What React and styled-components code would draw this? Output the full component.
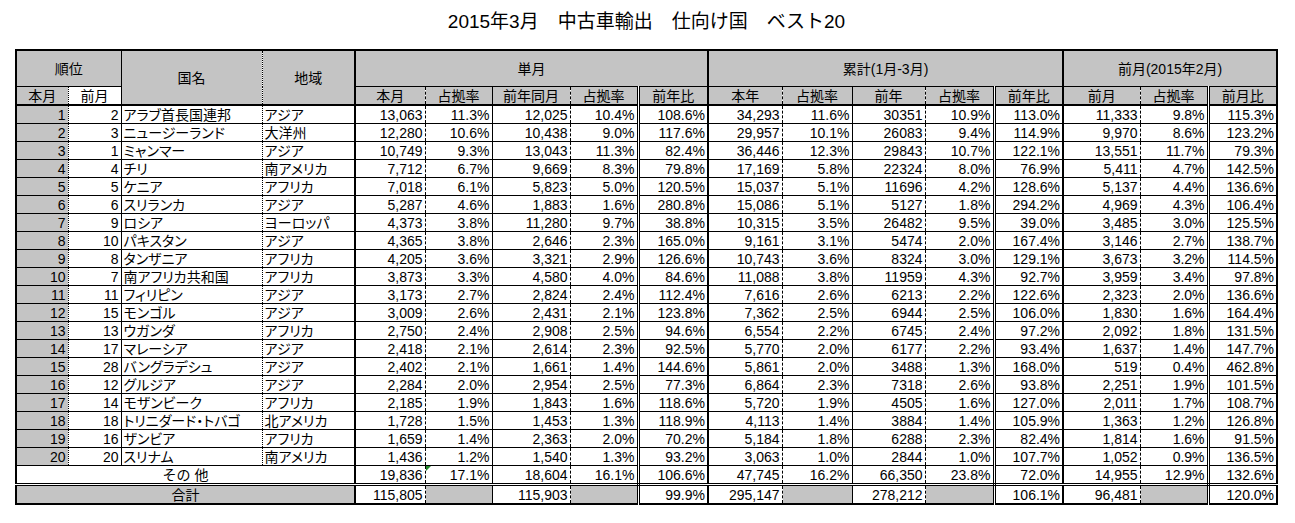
import React from "react";
import styled, { createGlobalStyle, css } from "styled-components";

const GlobalStyle = createGlobalStyle`
  html, body {
    margin: 0;
    padding: 0;
    background: #ffffff;
  }
  body {
    font-family: "Liberation Sans", "Noto Sans CJK JP", sans-serif;
    color: #000;
  }
`;

const GRAY = "#c4c4c4";

const LINES = {
  dotted: "1px dotted #000",
  solid: "1px solid #000",
  dashed: "1px dashed #000",
  double: "3px double #000",
  thick: "2px solid #000",
  none: "none",
};

// right edge of every column, left to right
const COL_RIGHT = [
  "dotted", "solid", "dotted", "thick",
  "dashed", "solid", "dashed", "double", "thick",
  "dashed", "solid", "dashed", "double", "thick",
  "dashed", "double", "none",
];

const COL_WIDTHS = [52, 53, 141, 93, 70, 67, 78, 68, 70, 74, 70, 73, 69, 69, 77, 68, 69];

const Page = styled.div`
  width: 1295px;
  padding-top: 10px;
`;

const Title = styled.div`
  width: 1265px;
  margin-left: 14px;
  text-align: center;
  font-size: 19px;
  line-height: 24px;
  height: 24px;
  white-space: pre;
  margin-bottom: 15px;
`;

const Sheet = styled.table`
  margin-left: 15px;
  border-collapse: collapse;
  table-layout: fixed;
  width: 1263px;
  border: 2px solid #000;
  font-size: 14px;
`;

const Cell = styled.td`
  position: relative;
  padding: 0 2px;
  height: ${(p) => p.$h || 17}px;
  line-height: 16px;
  white-space: nowrap;
  overflow: hidden;
  text-align: ${(p) => p.$align || "right"};
  background: ${(p) => (p.$gray ? GRAY : "#fff")};
  border-right: ${(p) => LINES[p.$right || "none"]};
  border-bottom: ${(p) => LINES[p.$bottom || "solid"]};
  ${(p) =>
    p.$prop &&
    css`
      font-feature-settings: "palt";
    `}
  ${(p) =>
    p.$head &&
    css`
      text-align: center;
      padding: 0;
    `}
`;

const ErrorMark = styled.span`
  position: absolute;
  left: 0;
  top: 0;
  width: 0;
  height: 0;
  border-top: 5px solid #1f8a2a;
  border-right: 5px solid transparent;
`;

const ROWS = [
  ["1", "2", "アラブ首長国連邦", "アジア", "13,063", "11.3%", "12,025", "10.4%", "108.6%", "34,293", "11.6%", "30351", "10.9%", "113.0%", "11,333", "9.8%", "115.3%"],
  ["2", "3", "ニュージーランド", "大洋州", "12,280", "10.6%", "10,438", "9.0%", "117.6%", "29,957", "10.1%", "26083", "9.4%", "114.9%", "9,970", "8.6%", "123.2%"],
  ["3", "1", "ミャンマー", "アジア", "10,749", "9.3%", "13,043", "11.3%", "82.4%", "36,446", "12.3%", "29843", "10.7%", "122.1%", "13,551", "11.7%", "79.3%"],
  ["4", "4", "チリ", "南アメリカ", "7,712", "6.7%", "9,669", "8.3%", "79.8%", "17,169", "5.8%", "22324", "8.0%", "76.9%", "5,411", "4.7%", "142.5%"],
  ["5", "5", "ケニア", "アフリカ", "7,018", "6.1%", "5,823", "5.0%", "120.5%", "15,037", "5.1%", "11696", "4.2%", "128.6%", "5,137", "4.4%", "136.6%"],
  ["6", "6", "スリランカ", "アジア", "5,287", "4.6%", "1,883", "1.6%", "280.8%", "15,086", "5.1%", "5127", "1.8%", "294.2%", "4,969", "4.3%", "106.4%"],
  ["7", "9", "ロシア", "ヨーロッパ", "4,373", "3.8%", "11,280", "9.7%", "38.8%", "10,315", "3.5%", "26482", "9.5%", "39.0%", "3,485", "3.0%", "125.5%"],
  ["8", "10", "パキスタン", "アジア", "4,365", "3.8%", "2,646", "2.3%", "165.0%", "9,161", "3.1%", "5474", "2.0%", "167.4%", "3,146", "2.7%", "138.7%"],
  ["9", "8", "タンザニア", "アフリカ", "4,205", "3.6%", "3,321", "2.9%", "126.6%", "10,743", "3.6%", "8324", "3.0%", "129.1%", "3,673", "3.2%", "114.5%"],
  ["10", "7", "南アフリカ共和国", "アフリカ", "3,873", "3.3%", "4,580", "4.0%", "84.6%", "11,088", "3.8%", "11959", "4.3%", "92.7%", "3,959", "3.4%", "97.8%"],
  ["11", "11", "フィリピン", "アジア", "3,173", "2.7%", "2,824", "2.4%", "112.4%", "7,616", "2.6%", "6213", "2.2%", "122.6%", "2,323", "2.0%", "136.6%"],
  ["12", "15", "モンゴル", "アジア", "3,009", "2.6%", "2,431", "2.1%", "123.8%", "7,362", "2.5%", "6944", "2.5%", "106.0%", "1,830", "1.6%", "164.4%"],
  ["13", "13", "ウガンダ", "アフリカ", "2,750", "2.4%", "2,908", "2.5%", "94.6%", "6,554", "2.2%", "6745", "2.4%", "97.2%", "2,092", "1.8%", "131.5%"],
  ["14", "17", "マレーシア", "アジア", "2,418", "2.1%", "2,614", "2.3%", "92.5%", "5,770", "2.0%", "6177", "2.2%", "93.4%", "1,637", "1.4%", "147.7%"],
  ["15", "28", "バングラデシュ", "アジア", "2,402", "2.1%", "1,661", "1.4%", "144.6%", "5,861", "2.0%", "3488", "1.3%", "168.0%", "519", "0.4%", "462.8%"],
  ["16", "12", "グルジア", "アジア", "2,284", "2.0%", "2,954", "2.5%", "77.3%", "6,864", "2.3%", "7318", "2.6%", "93.8%", "2,251", "1.9%", "101.5%"],
  ["17", "14", "モザンビーク", "アフリカ", "2,185", "1.9%", "1,843", "1.6%", "118.6%", "5,720", "1.9%", "4505", "1.6%", "127.0%", "2,011", "1.7%", "108.7%"],
  ["18", "18", "トリニダード・トバゴ", "北アメリカ", "1,728", "1.5%", "1,453", "1.3%", "118.9%", "4,113", "1.4%", "3884", "1.4%", "105.9%", "1,363", "1.2%", "126.8%"],
  ["19", "16", "ザンビア", "アフリカ", "1,659", "1.4%", "2,363", "2.0%", "70.2%", "5,184", "1.8%", "6288", "2.3%", "82.4%", "1,814", "1.6%", "91.5%"],
  ["20", "20", "スリナム", "南アメリカ", "1,436", "1.2%", "1,540", "1.3%", "93.2%", "3,063", "1.0%", "2844", "1.0%", "107.7%", "1,052", "0.9%", "136.5%"],
];

const OTHERS = ["19,836", "17.1%", "18,604", "16.1%", "106.6%", "47,745", "16.2%", "66,350", "23.8%", "72.0%", "14,955", "12.9%", "132.6%"];
const TOTAL = ["115,805", "", "115,903", "", "99.9%", "295,147", "", "278,212", "", "106.1%", "96,481", "", "120.0%"];

const SUB_HEADS = ["本月", "占拠率", "前年同月", "占拠率", "前年比", "本年", "占拠率", "前年", "占拠率", "前年比", "前月", "占拠率", "前月比"];

function App() {
  return (
    <Page>
      <GlobalStyle />
      <Title>{"2015年3月　中古車輸出　仕向け国　ベスト20"}</Title>
      <Sheet>
        <colgroup>
          {COL_WIDTHS.map((w, i) => (
            <col key={i} style={{ width: w }} />
          ))}
        </colgroup>
        <tbody>
          <tr>
            <Cell $head $gray colSpan={2} $h={35} $right="solid">順位</Cell>
            <Cell $head $gray rowSpan={2} $right="dotted" $bottom="thick">国名</Cell>
            <Cell $head $gray rowSpan={2} $right="thick" $bottom="thick">地域</Cell>
            <Cell $head $gray colSpan={5} $right="thick">単月</Cell>
            <Cell $head $gray colSpan={5} $right="thick">累計(1月-3月)</Cell>
            <Cell $head $gray colSpan={3}>前月(2015年2月)</Cell>
          </tr>
          <tr>
            <Cell $head $gray $right="dotted" $bottom="thick">本月</Cell>
            <Cell $head $right="solid" $bottom="thick">前月</Cell>
            {SUB_HEADS.map((t, i) => (
              <Cell key={i} $head $gray $right={COL_RIGHT[i + 4]} $bottom="thick">
                {t}
              </Cell>
            ))}
          </tr>
          {ROWS.map((row, r) => (
            <tr key={r}>
              {row.map((v, c) => (
                <Cell
                  key={c}
                  $gray={c === 0}
                  $prop={c === 2 || c === 3}
                  $align={c === 2 || c === 3 ? "left" : "right"}
                  $right={COL_RIGHT[c]}
                >
                  {v}
                </Cell>
              ))}
            </tr>
          ))}
          <tr>
            <Cell colSpan={4} $align="center" $right="thick" $bottom="double">その 他</Cell>
            {OTHERS.map((v, i) => (
              <Cell key={i} $right={COL_RIGHT[i + 4]} $bottom="double">
                {i === 1 && <ErrorMark />}
                {v}
              </Cell>
            ))}
          </tr>
          <tr>
            <Cell colSpan={4} $gray $align="center" $right="thick" $bottom="thick">合計</Cell>
            {TOTAL.map((v, i) => (
              <Cell key={i} $gray={v === ""} $right={COL_RIGHT[i + 4]} $bottom="thick">
                {v}
              </Cell>
            ))}
          </tr>
        </tbody>
      </Sheet>
    </Page>
  );
}

export default App;
